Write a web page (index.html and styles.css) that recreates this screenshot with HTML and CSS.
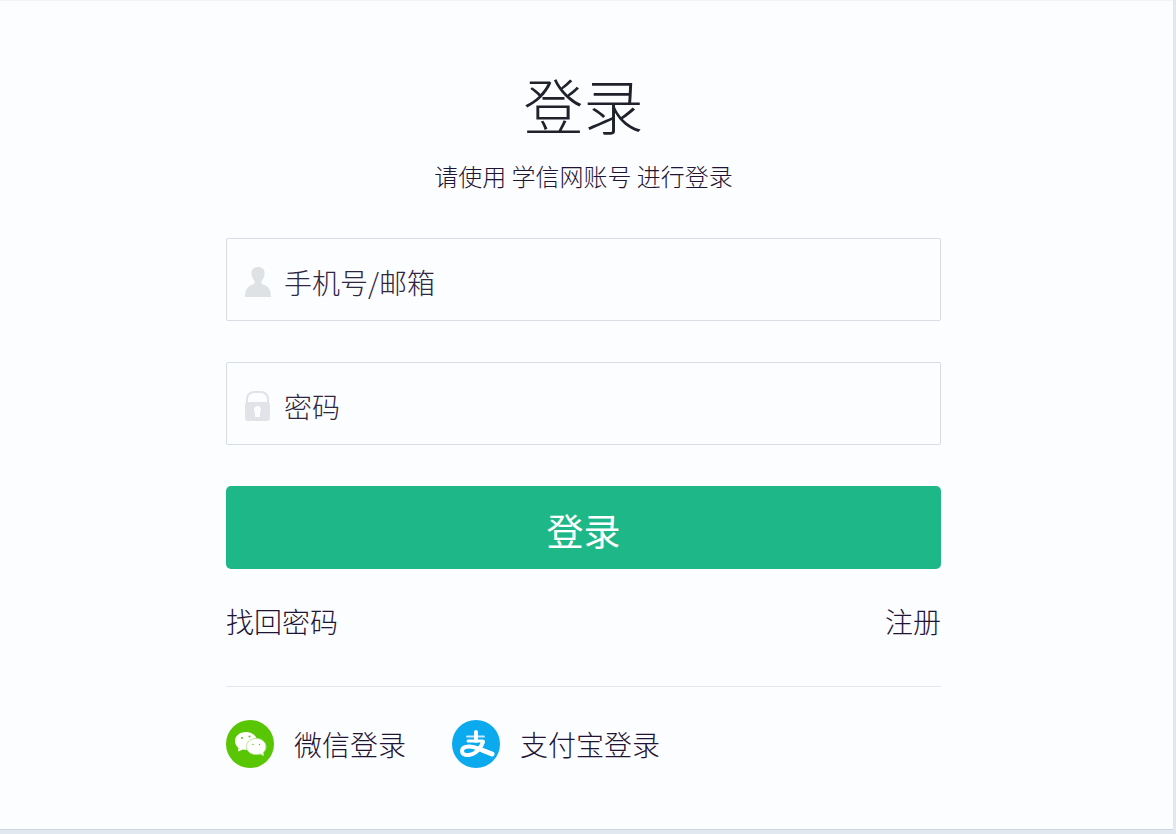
FILE: index.html
```html
<!DOCTYPE html>
<html lang="zh-CN">
	<head>
		<meta charset="UTF-8">
		<title>登录</title>
		<link rel="stylesheet" href="styles.css">
	</head>
	<body>
		<div class="panel">
			<form class="login" action="#">
				<h1 class="title">登录</h1>
				<p class="tip">请使用 学信网账号 进行登录</p>
				<div class="field">
					<label for="username">
						<svg class="icon" viewBox="0 0 28 32" role="img" aria-label="手机号/邮箱">
							<path fill="#dfe2e5" d="M14 1c-5 0-7 3-6.500 7 .3 3 1.500 5.500 3 7 .5 2-.5 3-3 4C3 21 1 24 1 31h26c0-7-2-10-6.500-12-2.500-1-3.500-2-3-4 1.500-1.500 2.700-4 3-7C21 4 19 1 14 1z"/>
						</svg>
					</label>
					<input type="text" id="username" placeholder="手机号/邮箱">
				</div>
				<div class="field">
					<label for="password">
						<svg class="icon" viewBox="0 0 28 32" role="img" aria-label="密码">
							<path fill="none" stroke="#dfe2e8" stroke-width="2" d="M3 14V9c0-4 3-7 7-7h7c4 0 7 3 7 7v5"/>
							<rect x="1" y="12" width="25" height="19" rx="3" fill="#e1e3e8"/>
							<path fill="#fcfdff" d="M13.500 16c2 0 3.500 1.500 3.500 3.500 0 1-.5 2-1 2.500v5h-5v-5c-.5-.5-1-1.500-1-2.500 0-2 1.500-3.500 3.500-3.500z"/>
						</svg>
					</label>
					<input type="password" id="password" placeholder="密码">
				</div>
				<button type="submit" class="btn">登录</button>
				<div class="links">
					<a href="#">找回密码</a>
					<a href="#">注册</a>
				</div>
				<div class="other">
					<a href="#">
						<svg class="logo" viewBox="0 0 48 48" aria-hidden="true">
							<circle cx="24" cy="24" r="24" fill="#58c505"/>
							<path fill="#fff" d="M20 12c-6.500 0-11 4-11 9 0 3 1.500 5.500 3.500 7l-.5 3.500 5-2c6 1.500 14-2 14-8.500 0-5-5-9-11-9z"/>
							<path fill="#fff" stroke="#b9e59b" stroke-width="1" d="M30 18.500c-5.500 0-9.500 3.500-9.500 8s4 8 9.500 8c1.500 0 2.800-.2 4-.6l3.500 1.600-.3-3c1.800-1.400 2.700-3.200 2.700-6 0-4.500-4.400-8-9.900-8z"/>
							<g fill="#58c505">
								<circle cx="16" cy="18" r="1"/>
								<circle cx="23.500" cy="16.500" r="1"/>
								<circle cx="27" cy="24.500" r=".7"/>
								<circle cx="33.500" cy="24.500" r=".7"/>
							</g>
						</svg>
						微信登录
					</a>
					<a href="#">
						<svg class="logo" viewBox="0 0 48 48" aria-hidden="true">
							<circle cx="24" cy="24" r="24" fill="#0ba9ee"/>
							<g fill="none" stroke="#fff" stroke-linecap="round">
								<path stroke-width="2" stroke="#c9eafb" d="M15 16.500h17"/>
								<path stroke-width="4" d="M24 12v9"/>
								<path stroke-width="3" d="M16 21h15"/>
								<path stroke-width="4" d="M31 22c-2 6-7 12-14 13-5 .5-7-1.500-7-4 0-3 3-4.500 7-4.500 7 0 13 4 23 7.500"/>
								<path stroke-width="5" d="M31 30.500l9 3.500"/>
							</g>
						</svg>
						支付宝登录
					</a>
				</div>
			</form>
		</div>
	</body>
</html>
```
FILE: styles.css
```css
*{
	margin:0px;
	padding:0px;
	box-sizing:border-box;
}
body{
	padding:0 3px 5px 0;
	background:#e2e8f0;
	font-family:"Noto Sans CJK SC",sans-serif;
	font-weight:300;
	color:#1f1433;
}
.panel{
	padding:63px 6px 61px 0;
	background:#fcfdff;
	border-top:1px solid #f0f2f5;
	border-bottom:1px solid #ccd5dc;
}
.login{
	width:100%;
	max-width:715px;
	margin:0 auto;
}
.title{
	font-size:60px;
	font-weight:300;
	line-height:80px;
	text-align:center;
	color:#20222b;
}
.tip{
	margin:14px 0 44px;
	font-size:24px;
	line-height:36px;
	text-align:center;
}
.field{
	display:flex;
	align-items:center;
	height:83px;
	margin-bottom:41px;
	padding:4px 17px 0;
	border:1px solid #d8dde5;
	border-radius:2px;
}
.field label{
	display:flex;
}
.icon{
	width:28px;
	height:32px;
}
.field input{
	flex:1;
	min-width:0;
	height:60px;
	margin-left:12px;
	border:none;
	outline:none;
	background:none;
	font:inherit;
	font-size:28px;
	color:#1f1433;
}
.field input::placeholder{
	color:#2f2640;
	opacity:1;
}
.btn{
	display:block;
	width:100%;
	height:83px;
	padding-top:4px;
	border:none;
	border-radius:5px;
	background:#1eb787;
	color:#fff;
	font-family:inherit;
	font-size:37px;
	font-weight:400;
	cursor:pointer;
}
a{
	color:inherit;
	text-decoration:none;
}
.links{
	display:flex;
	justify-content:space-between;
	padding:32px 0 45px;
	border-bottom:1px solid #e3e6ec;
	font-size:28px;
	line-height:40px;
}
.other{
	display:flex;
	flex-wrap:wrap;
	gap:20px 46px;
	padding-top:33px;
	font-size:28px;
	line-height:46px;
}
.other a{
	display:flex;
	align-items:center;
	gap:20px;
}
.logo{
	width:48px;
	height:48px;
}
```
